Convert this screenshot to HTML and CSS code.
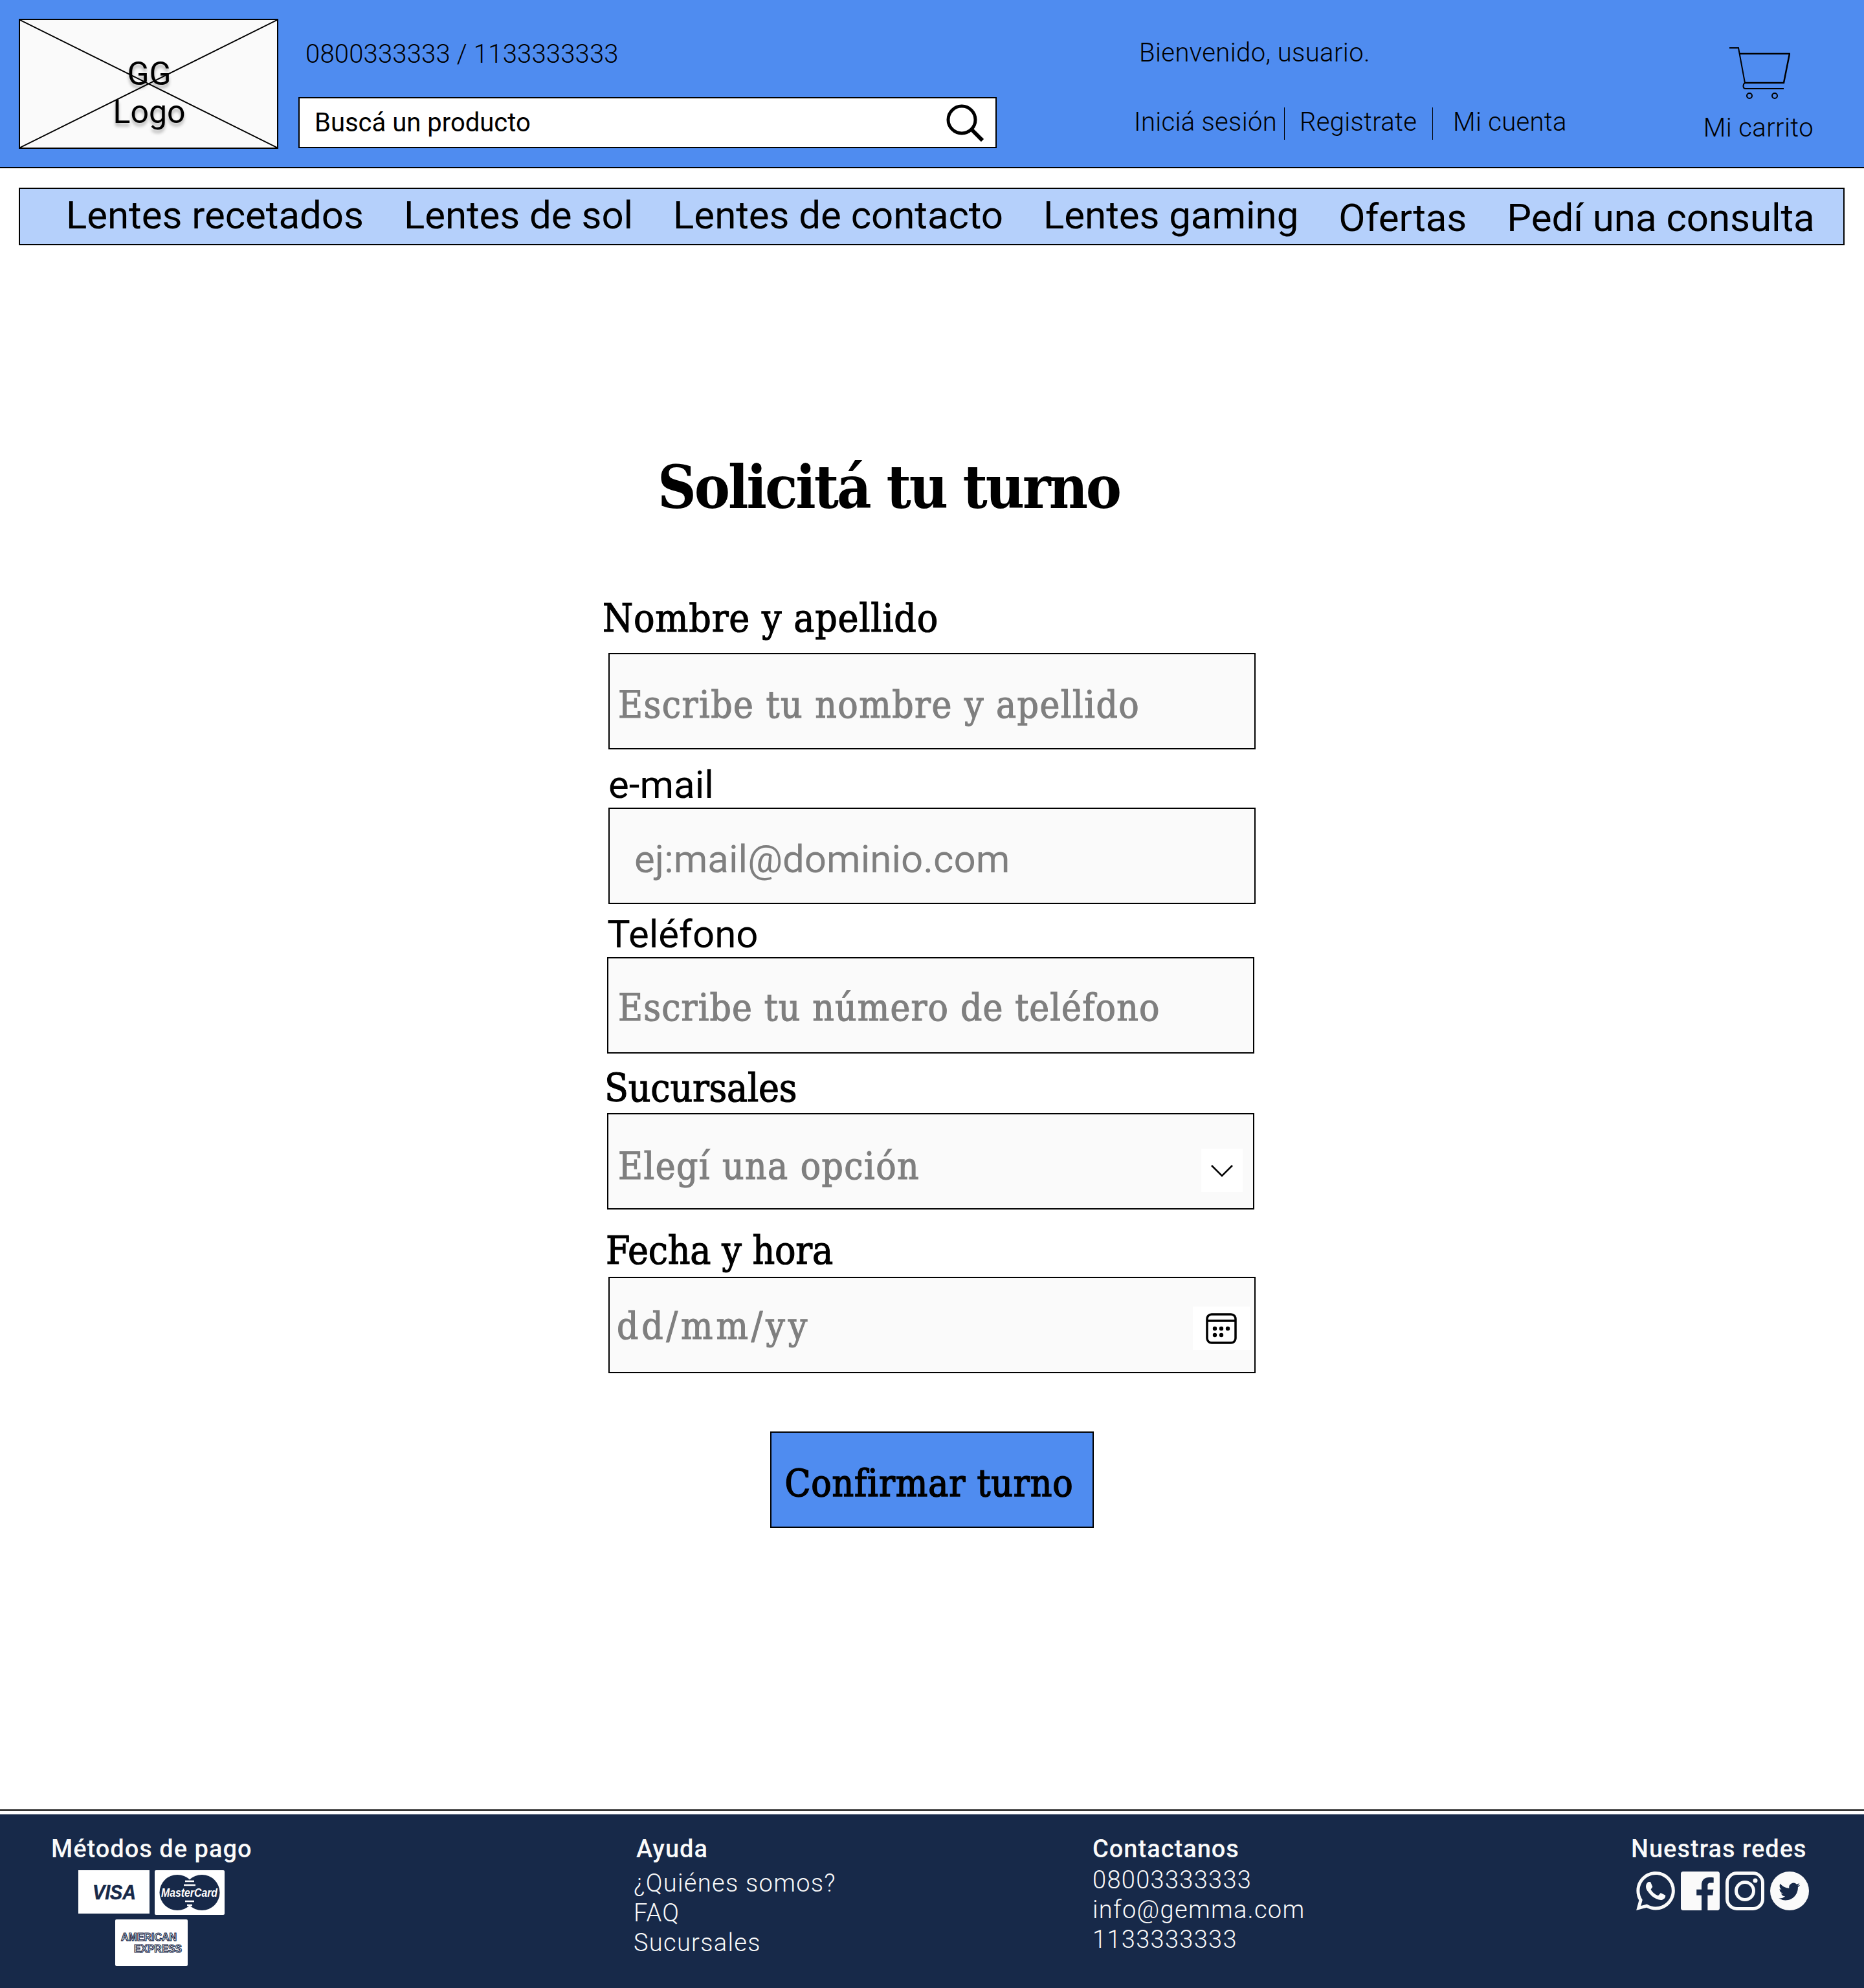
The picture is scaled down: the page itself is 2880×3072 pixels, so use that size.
FILE: index.html
```html
<!DOCTYPE html>
<html lang="es">
<head>
  <meta charset="utf-8">
  <title>Solicitá tu turno</title>
  <link rel="stylesheet" href="styles.css">
</head>
<body>
  <header class="site-header">
    <a class="logo">
      <svg class="logo-cross" viewBox="0 0 100 100" preserveAspectRatio="none">
        <path d="M0 0L100 100M100 0L0 100" stroke="#000" stroke-width="2" vector-effect="non-scaling-stroke"/>
      </svg>
      <span class="logo-text">GG<br>Logo</span>
    </a>

    <div class="search-col">
      <div class="phones">0800333333 / 1133333333</div>
      <div class="search-box">
        <span>Buscá un producto</span>
        <svg class="search-icon" viewBox="0 0 58 58" fill="none" stroke="#000" stroke-width="5">
          <circle cx="24" cy="24" r="21"/>
          <path d="M39 39L56 56" stroke-width="6"/>
        </svg>
      </div>
    </div>

    <div class="user-col">
      <div class="welcome">Bienvenido, usuario.</div>
      <div class="user-links">
        <a class="user-link user-link-login">Iniciá sesión</a>
        <a class="user-link user-link-signup">Registrate</a>
        <a class="user-link user-link-account">Mi cuenta</a>
      </div>
    </div>

    <a class="cart">
      <svg class="cart-icon" viewBox="0 0 94 80" fill="none" stroke="#000" stroke-width="2">
        <path d="M0 1H14L24 55C21 57 20 64 25 64H84"/>
        <path d="M15 10H93L84 55H24" stroke-width="2.5"/>
        <circle cx="31" cy="75" r="4"/>
        <circle cx="70" cy="75" r="4"/>
      </svg>
      <span>Mi carrito</span>
    </a>
  </header>

  <nav class="main-nav">
    <a class="nav-item">Lentes recetados</a>
    <a class="nav-item">Lentes de sol</a>
    <a class="nav-item">Lentes de contacto</a>
    <a class="nav-item">Lentes gaming</a>
    <a class="nav-item nav-item-low">Ofertas</a>
    <a class="nav-item nav-item-low">Pedí una consulta</a>
  </nav>

  <main class="main">
    <h1 class="page-title">Solicitá tu turno</h1>

    <form class="turno-form">
      <!-- Nombre -->
      <div class="field field-name">
        <label class="field-label slab">Nombre y apellido</label>
        <div class="input-box"><span class="placeholder slab">Escribe tu nombre y apellido</span></div>
      </div>

      <!-- Mail -->
      <div class="field field-mail">
        <label class="field-label">e-mail</label>
        <div class="input-box"><span class="placeholder placeholder-sans">ej:mail@dominio.com</span></div>
      </div>

      <!-- Telefono -->
      <div class="field field-phone">
        <label class="field-label">Teléfono</label>
        <div class="input-box"><span class="placeholder slab">Escribe tu número de teléfono</span></div>
      </div>

      <!-- Sucursal -->
      <div class="field field-branch">
        <label class="field-label slab">Sucursales</label>
        <div class="input-box">
          <span class="placeholder slab">Elegí una opción</span>
          <span class="input-addon addon-select">
            <svg width="34" height="20" viewBox="0 0 34 20" fill="none" stroke="#000" stroke-width="2.5"><path d="M1 2L17 18L33 2"/></svg>
          </span>
        </div>
      </div>

      <!-- Fecha -->
      <div class="field field-date">
        <label class="field-label slab">Fecha y hora</label>
        <div class="input-box">
          <span class="placeholder slab">dd/mm/yy</span>
          <span class="input-addon addon-date">
            <svg width="48" height="48" viewBox="0 0 48 48">
              <rect x="2" y="2" width="44" height="44" rx="7" fill="none" stroke="#000" stroke-width="3.5"/>
              <path d="M2 12H46" stroke="#000" stroke-width="3.5"/>
              <g>
                <circle cx="14" cy="24" r="3.2"/><circle cx="24" cy="24" r="3.2"/><circle cx="34" cy="24" r="3.2"/>
                <circle cx="14" cy="34" r="3.2"/><circle cx="24" cy="34" r="3.2"/>
              </g>
            </svg>
          </span>
        </div>
      </div>

      <button class="confirm-btn slab" type="button">Confirmar turno</button>
    </form>
  </main>

  <div class="footer-rule"></div>

  <footer class="site-footer">
    <div class="footer-col col-pay">
      <h4 class="footer-title title-pay">Métodos de pago</h4>
      <div class="cards">
        <svg class="card card-visa" viewBox="0 0 110 67">
          <rect width="110" height="67" fill="#fff"/>
          <text class="visa-text" x="22" y="45" textLength="67" lengthAdjust="spacingAndGlyphs">VISA</text>
        </svg>
        <svg class="card card-mc" viewBox="0 0 108 69">
          <rect width="108" height="69" rx="2" fill="#fff"/>
          <circle cx="35" cy="34.500" r="27.500" fill="#172949"/>
          <circle cx="73" cy="34.500" r="27.500" fill="#172949"/>
          <path d="M47 17H61M45 23H63M47 48H61M50 54H58" stroke="#fff" stroke-width="2.500"/>
          <text class="mc-text" x="10" y="41" textLength="87" lengthAdjust="spacingAndGlyphs">MasterCard</text>
        </svg>
        <svg class="card card-amex" viewBox="0 0 112 72">
          <rect width="112" height="72" rx="2" fill="#fff"/>
          <text class="amex-text" x="9" y="33" textLength="86" lengthAdjust="spacingAndGlyphs">AMERICAN</text>
          <text class="amex-text" x="29" y="51" textLength="74" lengthAdjust="spacingAndGlyphs">EXPRESS</text>
        </svg>
      </div>
    </div>

    <div class="footer-col col-help">
      <h4 class="footer-title title-help">Ayuda</h4>
      <a class="footer-line">¿Quiénes somos?</a>
      <a class="footer-line">FAQ</a>
      <a class="footer-line">Sucursales</a>
    </div>

    <div class="footer-col col-contact">
      <h4 class="footer-title">Contactanos</h4>
      <a class="footer-line">08003333333</a>
      <a class="footer-line">info@gemma.com</a>
      <a class="footer-line">1133333333</a>
    </div>

    <div class="footer-col col-social">
      <h4 class="footer-title">Nuestras redes</h4>
      <div class="social-icons">
        <svg class="social" viewBox="0 0 24 24" fill="#fafafa"><path d="M17.472 14.382c-.297-.149-1.758-.867-2.03-.967-.273-.099-.471-.148-.67.15-.197.297-.767.966-.94 1.164-.173.199-.347.223-.644.075-.297-.15-1.255-.463-2.39-1.475-.883-.788-1.48-1.761-1.653-2.059-.173-.297-.018-.458.13-.606.134-.133.298-.347.446-.52.149-.174.198-.298.298-.497.099-.198.05-.371-.025-.52-.075-.149-.669-1.612-.916-2.207-.242-.579-.487-.5-.669-.51-.173-.008-.371-.01-.57-.01-.198 0-.52.074-.792.372-.272.297-1.04 1.016-1.04 2.479 0 1.462 1.065 2.875 1.213 3.074.149.198 2.096 3.2 5.077 4.487.709.306 1.262.489 1.694.625.712.227 1.36.195 1.871.118.571-.085 1.758-.719 2.006-1.413.248-.694.248-1.289.173-1.413-.074-.124-.272-.198-.57-.347m-5.421 7.403h-.004a9.87 9.87 0 01-5.031-1.378l-.361-.214-3.741.982.998-3.648-.235-.374a9.86 9.86 0 01-1.51-5.26c.001-5.45 4.436-9.884 9.888-9.884 2.64 0 5.122 1.03 6.988 2.898a9.825 9.825 0 012.893 6.994c-.003 5.45-4.437 9.884-9.885 9.884m8.413-18.297A11.815 11.815 0 0012.05 0C5.495 0 .16 5.335.157 11.892c0 2.096.547 4.142 1.588 5.945L.057 24l6.305-1.654a11.882 11.882 0 005.683 1.448h.005c6.554 0 11.89-5.335 11.893-11.893a11.821 11.821 0 00-3.48-8.413z"/></svg>
        <svg class="social" viewBox="0 0 24 24" fill="#fafafa"><path d="M22.675 0H1.325C.593 0 0 .593 0 1.325v21.351C0 23.407.593 24 1.325 24H12.82v-9.294H9.692v-3.622h3.128V8.413c0-3.1 1.893-4.788 4.659-4.788 1.325 0 2.463.099 2.795.143v3.24l-1.918.001c-1.504 0-1.795.715-1.795 1.763v2.313h3.587l-.467 3.622h-3.12V24h6.116c.73 0 1.323-.593 1.323-1.325V1.325C24 .593 23.407 0 22.675 0z"/></svg>
        <svg class="social" viewBox="0 0 60 60" fill="none" stroke="#fafafa" stroke-width="5">
          <rect x="2.500" y="2.500" width="55" height="55" rx="15"/>
          <circle cx="30" cy="30" r="13.500"/>
          <circle cx="46" cy="14" r="3.500" fill="#fafafa" stroke="none"/>
        </svg>
        <svg class="social" viewBox="0 0 24 24">
          <circle cx="12" cy="12" r="12" fill="#fafafa"/>
          <g transform="translate(5.300 5.800) scale(.55)"><path fill="#172949" d="M23.953 4.57a10 10 0 01-2.825.775 4.958 4.958 0 002.163-2.723c-.951.555-2.005.959-3.127 1.184a4.92 4.92 0 00-8.384 4.482C7.69 8.095 4.067 6.13 1.64 3.162a4.822 4.822 0 00-.666 2.475c0 1.71.87 3.213 2.188 4.096a4.904 4.904 0 01-2.228-.616v.06a4.923 4.923 0 003.946 4.827 4.996 4.996 0 01-2.212.085 4.936 4.936 0 004.604 3.417 9.867 9.867 0 01-6.102 2.105c-.39 0-.779-.023-1.17-.067a13.995 13.995 0 007.557 2.209c9.053 0 13.998-7.496 13.998-13.985 0-.21 0-.42-.015-.63A9.935 9.935 0 0024 4.59z"/></g>
        </svg>
      </div>
    </div>
  </footer>
</body>
</html>
```

FILE: styles.css
```css
* {
  box-sizing: border-box;
}
html, body {
  margin: 0;
  padding: 0;
}
body {
  min-height: 3072px;
  display: flex;
  flex-direction: column;
  background-color: #fff;
  color: #000;
  font-family: Roboto, "Liberation Sans", sans-serif;
}
a {
  color: inherit;
  text-decoration: none;
}

/* Header */
.site-header {
  height: 260px;
  display: flex;
  padding: 29px 0 0 29px;
  background-color: #4f8cf0;
  border-bottom: 2px solid #000;
  font-size: 40px;
  font-weight: 300;
  letter-spacing: 0.4px;
}
.logo {
  position: relative;
  width: 401px;
  height: 201px;
  padding-left: 2px;
  display: flex;
  align-items: flex-start;
  justify-content: center;
  flex: none;
  background-color: #fafafa;
  border: 2px solid #000;
  font-size: 50px;
  font-weight: 400;
  letter-spacing: 0;
}
.logo-cross {
  position: absolute;
  inset: 0;
  width: 100%;
  height: 100%;
}
.logo-text {
  position: relative;
  margin-top: 54px;
  text-align: center;
  line-height: 59px;
  text-shadow: 0 5px 5px rgba(0, 0, 0, 0.3);
}
.search-col {
  width: 1079px;
  margin-left: 31px;
  flex: none;
}
.phones {
  margin-top: 31px;
  padding-left: 11px;
  line-height: 48px;
  letter-spacing: 0.2px;
}
.search-box {
  height: 79px;
  margin-top: 42px;
  padding: 0 13px 0 23px;
  display: flex;
  align-items: center;
  justify-content: space-between;
  background-color: #fff;
  border: 2px solid #000;
  font-weight: 400;
  letter-spacing: 0;
}
.search-icon {
  width: 58px;
  height: 58px;
  margin-right: 5px;
}
.user-col {
  margin-left: 212px;
  flex: none;
}
.welcome {
  margin-top: 29px;
  margin-left: 8px;
  line-height: 48px;
}
.user-links {
  display: flex;
  margin-top: 60px;
  letter-spacing: 0.3px;
}
.user-link {
  height: 50px;
  line-height: 45px;
}
.user-link-login {
  padding-right: 11px;
}
.user-link-signup {
  padding: 0 24px 0 23px;
  border-left: 1px solid #000;
}
.user-link-account {
  padding-left: 31px;
  border-left: 1px solid #000;
}
.cart {
  margin-left: auto;
  margin-right: 78px;
  display: flex;
  flex-direction: column;
  align-items: center;
  line-height: 48px;
}
.cart-icon {
  width: 94px;
  height: 80px;
  margin: 44px 0 21px 4px;
}

/* Menu */
.main-nav {
  width: 2821px;
  height: 89px;
  margin: 30px 0 0 29px;
  padding: 6px 0 0 71px;
  display: flex;
  gap: 62px;
  background-color: #b5d0fb;
  border: 2px solid #000;
  font-size: 60px;
  line-height: 70px;
  letter-spacing: -0.05px;
}
.nav-item-low {
  margin-top: 4px;
}

/* Form */
.main {
  flex: 1;
  padding-top: 319px;
}
.page-title {
  margin: 0 0 0 1016px;
  font-family: "DejaVu Serif Condensed", "DejaVu Serif", serif;
  font-size: 92px;
  font-weight: 700;
  line-height: 110px;
  letter-spacing: -3px;
}
.slab {
  font-family: "DejaVu Serif Condensed", "DejaVu Serif", serif;
  -webkit-text-stroke: 1.2px currentColor;
}
.turno-form {
  display: flex;
  flex-direction: column;
  align-items: flex-start;
}
.field-label {
  display: block;
  font-size: 60px;
  line-height: 60px;
}
.input-box {
  width: 1000px;
  height: 149px;
  display: flex;
  align-items: flex-start;
  background-color: #fafafa;
  border: 2px solid #000;
}
.placeholder {
  height: 145px;
  display: flex;
  align-items: center;
  color: #7f7f7f;
  font-size: 58px;
}
.placeholder-sans {
  font-size: 60px;
}
.input-addon {
  margin-left: auto;
  display: flex;
  align-items: center;
  justify-content: center;
  height: 67px;
  background-color: #fff;
}
.addon-select {
  width: 64px;
  margin: 53px 16px 0 auto;
}
.addon-date {
  width: 88px;
  margin: 44px 7px 0 auto;
}

/* each row sits a little off in the mockup */
.field-name {
  margin: 117px 0 0 940px;
}
.field-name .field-label {
  margin: 0 0 24px -9px;
  letter-spacing: 0.8px;
}
.field-name .placeholder {
  padding: 10px 0 0 13px;
  letter-spacing: 1.5px;
}
.field-mail {
  margin: 25px 0 0 940px;
}
.field-mail .field-label {
  margin-bottom: 5px;
}
.field-mail .placeholder {
  padding: 10px 0 0 38px;
}
.field-phone {
  margin: 17px 0 0 938px;
}
.field-phone .field-label {
  margin-bottom: 5px;
}
.field-phone .placeholder {
  padding: 6px 0 0 15px;
  letter-spacing: 1.15px;
}
.field-branch {
  margin: 23px 0 0 938px;
}
.field-branch .field-label {
  margin: 0 0 9px -4px;
  letter-spacing: -0.2px;
}
.field-branch .placeholder {
  padding: 15px 0 0 15px;
  letter-spacing: 1.45px;
}
.field-date {
  margin: 33px 0 0 940px;
}
.field-date .field-label {
  margin: 0 0 11px -4px;
  letter-spacing: -0.2px;
}
.field-date .placeholder {
  padding: 2px 0 0 11px;
  letter-spacing: 4.9px;
}
.confirm-btn {
  width: 500px;
  height: 149px;
  margin: 90px 0 0 1190px;
  padding: 10px 9px 0 0;
  background-color: #4f8cf0;
  border: 2px solid #000;
  color: #000;
  font-size: 58px;
  letter-spacing: 0.9px;
  -webkit-text-stroke-width: 1.6px;
}

/* Footer */
.footer-rule {
  height: 2px;
  margin-bottom: 5px;
  background-color: #000;
}
.site-footer {
  height: 269px;
  display: grid;
  grid-template-columns: 980px 708px 832px 1fr;
  padding-top: 30px;
  background-color: #172949;
  border-top: 1px solid #8b94a4;
  color: #fafafa;
  font-size: 38px;
  font-weight: 300;
  line-height: 46px;
}
.footer-col {
  display: flex;
  flex-direction: column;
}
.footer-title {
  margin: 0 0 2px;
  font-size: 38px;
  font-weight: 500;
  line-height: 46px;
  letter-spacing: 1px;
}
.footer-line {
  letter-spacing: 1.3px;
}
.col-pay {
  padding-left: 79px;
}
.col-help .footer-line {
  margin-left: -1px;
}
.title-help {
  margin-bottom: 7px;
  padding-left: 3px;
}
.cards {
  width: 240px;
  margin: 8px 0 0 42px;
  display: flex;
  flex-wrap: wrap;
  column-gap: 8px;
  row-gap: 7px;
}
.card-visa {
  width: 110px;
  height: 67px;
}
.card-mc {
  width: 108px;
  height: 69px;
}
.card-amex {
  width: 112px;
  height: 72px;
  margin-left: 57px;
}
.visa-text {
  font: italic 700 32px "Liberation Sans", sans-serif;
  fill: #172949;
  stroke: #172949;
  stroke-width: 0.6;
}
.mc-text {
  font: italic 700 18px "Liberation Sans", sans-serif;
  fill: #fff;
}
.amex-text {
  font: 700 16px "Liberation Sans", sans-serif;
  fill: #fff;
  stroke: #172949;
  stroke-width: 1.2;
}
.social-icons {
  display: flex;
  gap: 9px;
  margin: 10px 0 0 8px;
}
.social {
  width: 60px;
  height: 60px;
}
```
